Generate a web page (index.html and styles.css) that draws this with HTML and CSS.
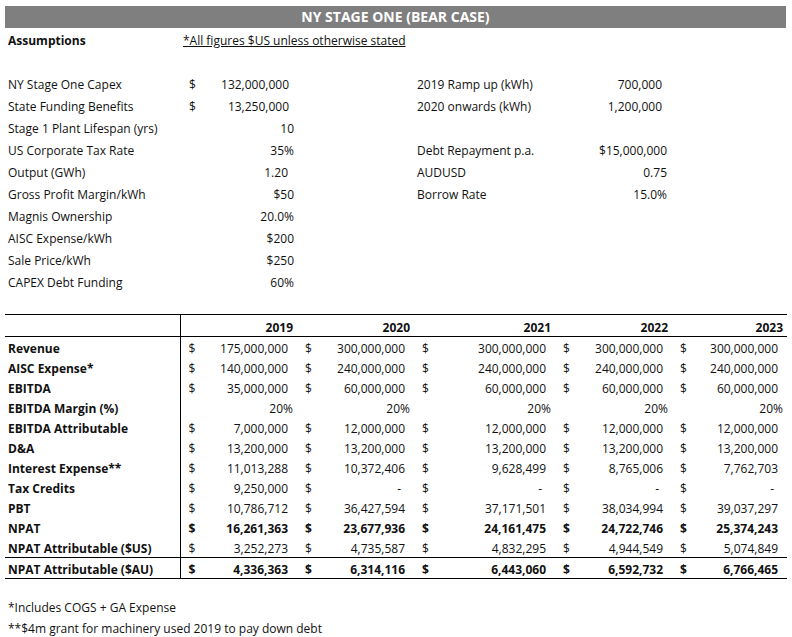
FILE: index.html
```html
<!DOCTYPE html>
<html>
<head>
<meta charset="utf-8">
<link rel="stylesheet" href="styles.css">
</head>
<body>
<div class="page">
  <div class="title">NY STAGE ONE (BEAR CASE)</div>

  <div class="assump">
    <div class="lbl b">Assumptions</div>
    <div class="sub">*All figures $US unless otherwise stated</div>
    <div></div>

    <div class="lbl"></div><div></div><div></div><div></div><div></div>

    <div class="lbl">NY Stage One Capex</div>
    <div class="acc"><span>$</span><span>132,000,000</span></div>
    <div></div>
    <div class="lbl">2019 Ramp up (kWh)</div>
    <div class="num r10">700,000</div>

    <div class="lbl">State Funding Benefits</div>
    <div class="acc"><span>$</span><span>13,250,000</span></div>
    <div></div>
    <div class="lbl">2020 onwards (kWh)</div>
    <div class="num r10">1,200,000</div>

    <div class="lbl">Stage 1 Plant Lifespan (yrs)</div>
    <div class="num r3">10</div>
    <div></div><div></div><div></div>

    <div class="lbl">US Corporate Tax Rate</div>
    <div class="num r3">35%</div>
    <div></div>
    <div class="lbl">Debt Repayment p.a.</div>
    <div class="num r5">$15,000,000</div>

    <div class="lbl">Output (GWh)</div>
    <div class="num r9">1.20</div>
    <div></div>
    <div class="lbl">AUDUSD</div>
    <div class="num r5">0.75</div>

    <div class="lbl">Gross Profit Margin/kWh</div>
    <div class="num r3">$50</div>
    <div></div>
    <div class="lbl">Borrow Rate</div>
    <div class="num r5">15.0%</div>

    <div class="lbl">Magnis Ownership</div>
    <div class="num r3">20.0%</div>
    <div></div><div></div><div></div>

    <div class="lbl">AISC Expense/kWh</div>
    <div class="num r3">$200</div>
    <div></div><div></div><div></div>

    <div class="lbl">Sale Price/kWh</div>
    <div class="num r3">$250</div>
    <div></div><div></div><div></div>

    <div class="lbl">CAPEX Debt Funding</div>
    <div class="num r3">60%</div>
    <div></div><div></div><div></div>
  </div>

  <table class="fin">
    <colgroup>
      <col class="w0"><col class="w1"><col class="w2"><col class="w3"><col class="w4"><col class="w5">
    </colgroup>
    <thead>
      <tr class="head">
        <th class="first"></th><th>2019</th><th>2020</th><th>2021</th><th>2022</th><th>2023</th>
      </tr>
    </thead>
    <tbody>
      <tr>
        <td class="first">Revenue</td>
        <td><div class="c"><span>$</span><span>175,000,000</span></div></td>
        <td><div class="c"><span>$</span><span>300,000,000</span></div></td>
        <td><div class="c"><span>$</span><span>300,000,000</span></div></td>
        <td><div class="c"><span>$</span><span>300,000,000</span></div></td>
        <td><div class="c"><span>$</span><span>300,000,000</span></div></td>
      </tr>
      <tr>
        <td class="first">AISC Expense*</td>
        <td><div class="c"><span>$</span><span>140,000,000</span></div></td>
        <td><div class="c"><span>$</span><span>240,000,000</span></div></td>
        <td><div class="c"><span>$</span><span>240,000,000</span></div></td>
        <td><div class="c"><span>$</span><span>240,000,000</span></div></td>
        <td><div class="c"><span>$</span><span>240,000,000</span></div></td>
      </tr>
      <tr>
        <td class="first">EBITDA</td>
        <td><div class="c"><span>$</span><span>35,000,000</span></div></td>
        <td><div class="c"><span>$</span><span>60,000,000</span></div></td>
        <td><div class="c"><span>$</span><span>60,000,000</span></div></td>
        <td><div class="c"><span>$</span><span>60,000,000</span></div></td>
        <td><div class="c"><span>$</span><span>60,000,000</span></div></td>
      </tr>
      <tr>
        <td class="first">EBITDA Margin (%)</td>
        <td class="pct">20%</td>
        <td class="pct">20%</td>
        <td class="pct">20%</td>
        <td class="pct">20%</td>
        <td class="pct">20%</td>
      </tr>
      <tr>
        <td class="first">EBITDA Attributable</td>
        <td><div class="c"><span>$</span><span>7,000,000</span></div></td>
        <td><div class="c"><span>$</span><span>12,000,000</span></div></td>
        <td><div class="c"><span>$</span><span>12,000,000</span></div></td>
        <td><div class="c"><span>$</span><span>12,000,000</span></div></td>
        <td><div class="c"><span>$</span><span>12,000,000</span></div></td>
      </tr>
      <tr>
        <td class="first">D&amp;A</td>
        <td><div class="c"><span>$</span><span>13,200,000</span></div></td>
        <td><div class="c"><span>$</span><span>13,200,000</span></div></td>
        <td><div class="c"><span>$</span><span>13,200,000</span></div></td>
        <td><div class="c"><span>$</span><span>13,200,000</span></div></td>
        <td><div class="c"><span>$</span><span>13,200,000</span></div></td>
      </tr>
      <tr>
        <td class="first">Interest Expense**</td>
        <td><div class="c"><span>$</span><span>11,013,288</span></div></td>
        <td><div class="c"><span>$</span><span>10,372,406</span></div></td>
        <td><div class="c"><span>$</span><span>9,628,499</span></div></td>
        <td><div class="c"><span>$</span><span>8,765,006</span></div></td>
        <td><div class="c"><span>$</span><span>7,762,703</span></div></td>
      </tr>
      <tr>
        <td class="first">Tax Credits</td>
        <td><div class="c"><span>$</span><span>9,250,000</span></div></td>
        <td><div class="c dash"><span>$</span><span>-</span></div></td>
        <td><div class="c dash"><span>$</span><span>-</span></div></td>
        <td><div class="c dash"><span>$</span><span>-</span></div></td>
        <td><div class="c dash"><span>$</span><span>-</span></div></td>
      </tr>
      <tr>
        <td class="first">PBT</td>
        <td><div class="c"><span>$</span><span>10,786,712</span></div></td>
        <td><div class="c"><span>$</span><span>36,427,594</span></div></td>
        <td><div class="c"><span>$</span><span>37,171,501</span></div></td>
        <td><div class="c"><span>$</span><span>38,034,994</span></div></td>
        <td><div class="c"><span>$</span><span>39,037,297</span></div></td>
      </tr>
      <tr class="bold">
        <td class="first">NPAT</td>
        <td><div class="c"><span>$</span><span>16,261,363</span></div></td>
        <td><div class="c"><span>$</span><span>23,677,936</span></div></td>
        <td><div class="c"><span>$</span><span>24,161,475</span></div></td>
        <td><div class="c"><span>$</span><span>24,722,746</span></div></td>
        <td><div class="c"><span>$</span><span>25,374,243</span></div></td>
      </tr>
      <tr>
        <td class="first">NPAT Attributable ($US)</td>
        <td><div class="c"><span>$</span><span>3,252,273</span></div></td>
        <td><div class="c"><span>$</span><span>4,735,587</span></div></td>
        <td><div class="c"><span>$</span><span>4,832,295</span></div></td>
        <td><div class="c"><span>$</span><span>4,944,549</span></div></td>
        <td><div class="c"><span>$</span><span>5,074,849</span></div></td>
      </tr>
      <tr class="bold total">
        <td class="first">NPAT Attributable ($AU)</td>
        <td><div class="c"><span>$</span><span>4,336,363</span></div></td>
        <td><div class="c"><span>$</span><span>6,314,116</span></div></td>
        <td><div class="c"><span>$</span><span>6,443,060</span></div></td>
        <td><div class="c"><span>$</span><span>6,592,732</span></div></td>
        <td><div class="c"><span>$</span><span>6,766,465</span></div></td>
      </tr>
    </tbody>
  </table>

  <div class="notes">
    <div>*Includes COGS + GA Expense</div>
    <div>**$4m grant for machinery used 2019 to pay down debt</div>
  </div>
</div>
</body>
</html>
```

FILE: styles.css
```css
html, body {
  margin: 0;
  padding: 0;
  background: #ffffff;
}

body {
  font-family: "Open Sans", "Noto Sans", "DejaVu Sans", sans-serif;
  font-size: 12px;
  color: #111111;
}

.page {
  padding: 6px 0 0 5px;
  width: 782px;
}

.title {
  background: #7f7f7f;
  color: #ffffff;
  font-weight: bold;
  font-size: 14px;
  height: 22px;
  line-height: 22px;
  text-align: center;
  width: 781px;
}

.assump {
  display: grid;
  grid-template-columns: 175px 117px 117px 141px 117px;
  grid-auto-rows: 22px;
  align-items: center;
  white-space: nowrap;
}

.assump > div {
  padding-top: 3px;
}

.lbl {
  padding-left: 3px;
}

.b {
  font-weight: bold;
}

.sub {
  grid-column: 2 / span 3;
  padding-left: 3px;
  text-decoration: underline;
}

.acc {
  display: flex;
  justify-content: space-between;
  padding: 0 8px 0 9px;
}

.num {
  text-align: right;
}

.r3 { padding-right: 3px; }
.r5 { padding-right: 5px; }
.r9 { padding-right: 9px; }
.r10 { padding-right: 10px; }

.fin {
  margin-top: 22px;
  border-collapse: collapse;
  table-layout: fixed;
  width: 782px;
  white-space: nowrap;
}

.w0 { width: 175px; }
.w1 { width: 117px; }
.w2 { width: 117px; }
.w3 { width: 141px; }
.w4 { width: 117px; }
.w5 { width: 115px; }

.fin th,
.fin td {
  padding: 3px 0 0 0;
  height: 17px;
  line-height: 17px;
}

.fin .head th {
  height: 18px;
  font-weight: bold;
  text-align: right;
  padding-right: 4px;
  border-top: 1px solid #000000;
  border-bottom: 1px solid #000000;
}

.fin .first {
  font-weight: bold;
  text-align: left;
  padding-left: 3px;
  border-right: 1px solid #000000;
}

.c {
  display: flex;
  justify-content: space-between;
  padding: 0 9px 0 8px;
}

.c.dash {
  padding-right: 13px;
}

.pct {
  text-align: right;
  padding-right: 4px !important;
}

.bold td {
  font-weight: bold;
}

.total td {
  border-top: 1px solid #000000;
  border-bottom: 1px solid #000000;
}

.notes {
  margin-top: 18px;
  line-height: 21px;
  padding-left: 3px;
}
```
